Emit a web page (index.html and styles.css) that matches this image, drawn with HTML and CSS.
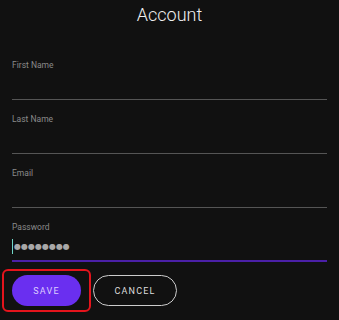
FILE: index.html
```html
<!DOCTYPE html>
<html lang="en">
<head>
  <meta charset="UTF-8" />
  <meta name="viewport" content="width=device-width, initial-scale=1" />
  <title>Account</title>
  <link rel="stylesheet" href="styles.css">
</head>
<body>

<div class="page">
  <h1 class="title">Account</h1>
  <form id="account-form">
    <div class="fields">
      <div class="field">
        <label for="first-name">First Name</label>
        <input type="text" id="first-name" class="form-control" />
      </div>
      <div class="field">
        <label for="last-name">Last Name</label>
        <input type="text" id="last-name" class="form-control" />
      </div>
      <div class="field">
        <label for="email">Email</label>
        <input type="email" id="email" class="form-control" />
      </div>
      <div class="field active">
        <label for="password">Password</label>
        <div class="form-control">
          <span class="caret"></span>
          <span class="dots">●●●●●●●●</span>
        </div>
      </div>
    </div>
    <div class="actions">
      <div class="focus-ring">
        <button type="submit" class="btn btn-primary">SAVE</button>
      </div>
      <button type="button" class="btn btn-outline">CANCEL</button>
    </div>
  </form>
</div>

</body>
</html>
```

FILE: styles.css
```css
* {
  margin: 0; padding: 0; box-sizing: border-box;
  font-family: Roboto, 'Liberation Sans', sans-serif;
}
body {
  background-color: #111111;
  color: #eeeeee;
}
.title {
  font-size: 18px;
  font-weight: 300;
  line-height: 30px;
  text-align: center;
  color: #f0f0f0;
}
.fields {
  padding: 29px 12px 0;
}
.field {
  margin-bottom: 13px;
}
label {
  display: block;
  font-size: 8.5px;
  line-height: 12px;
  color: #8a8a8a;
}
.form-control {
  display: flex;
  align-items: center;
  width: 100%;
  height: 29px;
  border: none;
  border-bottom: 1px solid #555555;
  background: transparent;
  color: #eeeeee;
  outline: none;
}
.field.active .form-control {
  border-bottom: 2px solid #4b20a8;
}
.caret {
  width: 1px;
  height: 15px;
  background: #6fd6c8;
}
.dots {
  font-family: 'DejaVu Sans', sans-serif;
  font-size: 8px;
  color: #a8a8a8;
  margin-left: 1px;
}
.actions {
  display: flex;
  align-items: center;
  gap: 2px;
  padding: 0 2px;
  margin-top: -6px;
}
.focus-ring {
  border: 2px solid #e5141c;
  border-radius: 6px;
  padding: 4px 8px;
}
.btn {
  height: 31px;
  border-radius: 16px;
  font-size: 9px;
  font-weight: 400;
  letter-spacing: 1.2px;
  cursor: pointer;
}
.btn-primary {
  width: 69px;
  border: none;
  background-color: #6a2ff0;
  color: #dccdff;
}
.btn-outline {
  width: 84px;
  border: 1px solid #cccccc;
  background: transparent;
  color: #dddddd;
}
```
